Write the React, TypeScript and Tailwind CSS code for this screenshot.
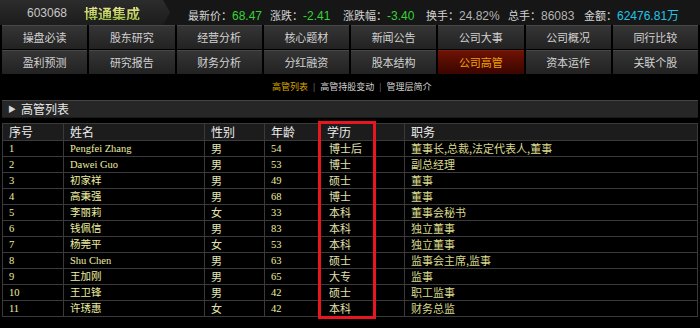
import React from 'react'

const ROW1 = ['操盘必读', '股东研究', '经营分析', '核心题材', '新闻公告', '公司大事', '公司概况', '同行比较']
const ROW2 = ['盈利预测', '研究报告', '财务分析', '分红融资', '股本结构', '公司高管', '资本运作', '关联个股']

const STATS: { label: string; value: string; color: string; w: string }[] = [
  { label: '最新价：', value: '68.47', color: 'text-[#33d433]', w: 'w-[82px]' },
  { label: '涨跌：', value: '-2.41', color: 'text-[#33d433]', w: 'w-[73px]' },
  { label: '涨跌幅：', value: '-3.40', color: 'text-[#33d433]', w: 'w-[83px]' },
  { label: '换手：', value: '24.82%', color: 'text-[#b4b4b4]', w: 'w-[82px]' },
  { label: '总手：', value: '86083', color: 'text-[#b4b4b4]', w: 'w-[76px]' },
  { label: '金额：', value: '62476.81万', color: 'text-[#22c4e6]', w: '' },
]

const ROWS = [
  ['1', 'Pengfei Zhang', '男', '54', '博士后', '董事长,总裁,法定代表人,董事'],
  ['2', 'Dawei Guo', '男', '53', '博士', '副总经理'],
  ['3', '初家祥', '男', '49', '硕士', '董事'],
  ['4', '高秉强', '男', '68', '博士', '董事'],
  ['5', '李丽莉', '女', '33', '本科', '董事会秘书'],
  ['6', '钱佩信', '男', '83', '本科', '独立董事'],
  ['7', '杨莞平', '女', '53', '本科', '独立董事'],
  ['8', 'Shu Chen', '男', '63', '硕士', '监事会主席,监事'],
  ['9', '王加刚', '男', '65', '大专', '监事'],
  ['10', '王卫锋', '男', '42', '硕士', '职工监事'],
  ['11', '许琇惠', '女', '42', '本科', '财务总监'],
]

const CJK = "font-['Noto_Sans_CJK_SC',sans-serif]"
const SERIF = "font-['Liberation_Serif','Noto_Sans_CJK_SC',serif]"

function Tab({ label, active }: { label: string; active?: boolean }) {
  return (
    <div
      className={`h-[24px] flex items-center justify-center text-[11px] border-t ${
        active
          ? 'bg-gradient-to-b from-[#6e1204] to-[#3a0600] border-[#7a2010] text-[#f0a400]'
          : 'bg-gradient-to-b from-[#353535] to-[#222] border-[#484848] text-[#d2d2d2]'
      }`}
    >
      {label}
    </div>
  )
}

export default function App() {
  return (
    <div className={`w-[700px] h-[328px] bg-black overflow-hidden ${CJK}`}>
      {/* 顶部行情条 */}
      <div className="h-[25px] flex items-center bg-[#161616]">
        <div className="w-[170px] h-full flex items-center bg-gradient-to-b from-[#2c2c2c] to-[#1c1c1c] [clip-path:polygon(0_0,163px_0,170px_50%,163px_100%,0_100%)]">
          <span className="ml-[27px] text-[12px] text-[#c8c8c8] font-['Liberation_Sans',sans-serif]">603068</span>
          <span className="ml-[17px] text-[14px] font-bold leading-none bg-gradient-to-b from-[#f0e890] to-[#9cc040] bg-clip-text text-transparent">博通集成</span>
        </div>
        <div className="ml-[18px] flex items-center">
          {STATS.map(s => (
            <span key={s.label} className={`${s.w} whitespace-nowrap`}>
              <span className="text-[11px] text-[#d4d4d4]">{s.label}</span>
              <span className={`${s.color} text-[12px] font-['Liberation_Sans','Noto_Sans_CJK_SC',sans-serif]`}>{s.value}</span>
            </span>
          ))}
        </div>
      </div>

      {/* 导航 */}
      <div className="px-[2px] grid grid-cols-8 gap-x-[2px] gap-y-[1px]">
        {ROW1.map(t => <Tab key={t} label={t} />)}
        {ROW2.map(t => <Tab key={t} label={t} active={t === '公司高管'} />)}
      </div>

      {/* 子导航 */}
      <div className="h-[26px] flex items-center pl-[272px] text-[9px] text-[#d0d0d0]">
        <span className="text-[#d8a400]">高管列表</span>
        <span className="mx-[5px] text-[#888] text-[8px]">|</span>
        <span>高管持股变动</span>
        <span className="mx-[5px] text-[#888] text-[8px]">|</span>
        <span>管理层简介</span>
      </div>

      {/* 标题栏 */}
      <div className="mx-[2px] h-[18px] flex items-center bg-[#262626] border-t border-[#444] border-b border-b-[#1a1a1a]">
        <span className="ml-[6px] text-[8px] text-[#d8d8d8]">▶</span>
        <span className="ml-[5px] text-[12px] text-[#e8e8e8]">高管列表</span>
      </div>

      {/* 表格 */}
      <div className="relative mx-[2px] mt-[5px]">
        <table className="w-[696px] border-collapse table-fixed">
          <colgroup>
            <col className="w-[61px]" />
            <col className="w-[141px]" />
            <col className="w-[60px]" />
            <col className="w-[56px]" />
            <col className="w-[84px]" />
            <col />
          </colgroup>
          <thead>
            <tr className="h-[17px] bg-[#1c1c1c]">
              {['序号', '姓名', '性别', '年龄', '学历', '职务'].map(h => (
                <th key={h} className="border border-[#3a3a3a] text-left font-normal text-[12px] text-[#ececec] pl-[6px] leading-[14px]">
                  {h}
                </th>
              ))}
            </tr>
          </thead>
          <tbody>
            {ROWS.map(r => (
              <tr key={r[0]} className="h-[16px]">
                <td className={`border border-[#3a3a3a] pl-[6px] text-[10.5px] leading-[13px] text-[#eeeea0] ${SERIF}`}>{r[0]}</td>
                <td className={`border border-[#3a3a3a] pl-[6px] text-[10.5px] leading-[13px] text-[#eeeea0] ${SERIF}`}>{r[1]}</td>
                <td className="border border-[#3a3a3a] pl-[6px] text-[11px] leading-[13px] text-[#e0e0b0]">{r[2]}</td>
                <td className={`border border-[#3a3a3a] pl-[6px] text-[10.5px] leading-[13px] text-[#eeeea0] ${SERIF}`}>{r[3]}</td>
                <td className="border border-[#3a3a3a] pl-[8px] text-[11px] leading-[13px] text-[#e0e0b0]">{r[4]}</td>
                <td className="border border-[#3a3a3a] pl-[6px] text-[11px] leading-[13px] text-[#d8d88c]">{r[5]}</td>
              </tr>
            ))}
          </tbody>
        </table>
        {/* 红框标注 */}
        <div className="absolute left-[316px] top-[-2px] w-[58px] h-[198px] border-[3px] border-[#e8161e]" />
      </div>
    </div>
  )
}
